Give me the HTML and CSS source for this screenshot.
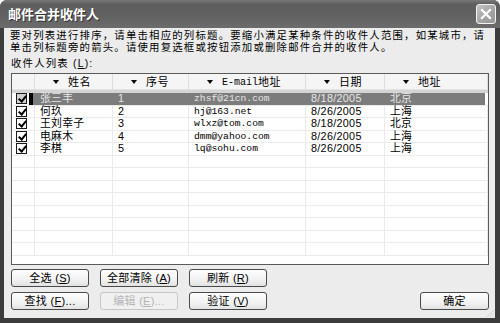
FILE: index.html
```html
<!DOCTYPE html>
<html lang="zh-CN">
<head>
  <meta charset="UTF-8" />
  <title>邮件合并收件人</title>
  <link rel="stylesheet" href="styles.css">
</head>
<body>
  <div class="window">
    <div class="titlebar">
      <span class="title">邮件合并收件人</span>
      <span class="close">
        <svg width="12" height="12" viewBox="0 0 12 12"><path d="M2 2 L10 10 M10 2 L2 10" stroke="#fff" stroke-width="2.2" stroke-linecap="square"/></svg>
      </span>
    </div>

    <div class="content">
      <p class="hint">要对列表进行排序，请单击相应的列标题。要缩小满足某种条件的收件人范围，如某城市，请<br>单击列标题旁的箭头。请使用复选框或按钮添加或删除邮件合并的收件人。</p>
      <div class="label">收件人列表 (<u>L</u>):</div>

      <div class="listview">
        <div class="lv-head">
          <div class="hcell"></div>
          <div class="hcell"><i class="arrow"></i>姓名</div>
          <div class="hcell"><i class="arrow"></i>序号</div>
          <div class="hcell"><i class="arrow"></i><span class="mono">E-mail</span>地址</div>
          <div class="hcell"><i class="arrow"></i>日期</div>
          <div class="hcell"><i class="arrow"></i>地址</div>
        </div>
        <div class="lv-body">
          <div class="row selected">
            <div class="cell"><span class="check"></span></div>
            <div class="cell sel-start">张三丰</div>
            <div class="cell">1</div>
            <div class="cell mono">zhsf@21cn.com</div>
            <div class="cell">8/18/2005</div>
            <div class="cell sel-end">北京</div>
          </div>
          <div class="row">
            <div class="cell"><span class="check"></span></div>
            <div class="cell">何玖</div>
            <div class="cell">2</div>
            <div class="cell mono">hj@163.net</div>
            <div class="cell">8/26/2005</div>
            <div class="cell">上海</div>
          </div>
          <div class="row">
            <div class="cell"><span class="check"></span></div>
            <div class="cell">王刘幸子</div>
            <div class="cell">3</div>
            <div class="cell mono">wlxz@tom.com</div>
            <div class="cell">8/18/2005</div>
            <div class="cell">北京</div>
          </div>
          <div class="row">
            <div class="cell"><span class="check"></span></div>
            <div class="cell">电麻木</div>
            <div class="cell">4</div>
            <div class="cell mono">dmm@yahoo.com</div>
            <div class="cell">8/26/2005</div>
            <div class="cell">上海</div>
          </div>
          <div class="row">
            <div class="cell"><span class="check"></span></div>
            <div class="cell">李棋</div>
            <div class="cell">5</div>
            <div class="cell mono">lq@sohu.com</div>
            <div class="cell">8/26/2005</div>
            <div class="cell">上海</div>
          </div>
          <div class="row empty"><div class="cell"></div><div class="cell"></div><div class="cell"></div><div class="cell"></div><div class="cell"></div><div class="cell"></div></div>
          <div class="row empty"><div class="cell"></div><div class="cell"></div><div class="cell"></div><div class="cell"></div><div class="cell"></div><div class="cell"></div></div>
          <div class="row empty"><div class="cell"></div><div class="cell"></div><div class="cell"></div><div class="cell"></div><div class="cell"></div><div class="cell"></div></div>
          <div class="row empty"><div class="cell"></div><div class="cell"></div><div class="cell"></div><div class="cell"></div><div class="cell"></div><div class="cell"></div></div>
          <div class="row empty"><div class="cell"></div><div class="cell"></div><div class="cell"></div><div class="cell"></div><div class="cell"></div><div class="cell"></div></div>
          <div class="row empty"><div class="cell"></div><div class="cell"></div><div class="cell"></div><div class="cell"></div><div class="cell"></div><div class="cell"></div></div>
          <div class="row empty"><div class="cell"></div><div class="cell"></div><div class="cell"></div><div class="cell"></div><div class="cell"></div><div class="cell"></div></div>
          <div class="row empty"><div class="cell"></div><div class="cell"></div><div class="cell"></div><div class="cell"></div><div class="cell"></div><div class="cell"></div></div>
        </div>
      </div>

      <div class="actions">
        <div class="btn-row">
          <button class="btn">全选 (<u>S</u>)</button>
          <button class="btn">全部清除 (<u>A</u>)</button>
          <button class="btn">刷新 (<u>R</u>)</button>
        </div>
        <div class="btn-row">
          <button class="btn">查找 (<u>F</u>)...</button>
          <button class="btn disabled">编辑 (<u>E</u>)...</button>
          <button class="btn">验证 (<u>V</u>)</button>
          <button class="btn ok">确定</button>
        </div>
      </div>
    </div>

    <svg class="grip" width="9" height="9" viewBox="0 0 9 9"><path d="M8 1 L1 8 M8 4 L4 8 M8 7 L7 8" stroke="#cfcfcf" stroke-width="1"/></svg>
  </div>
</body>
</html>
```

FILE: styles.css
```css
* {
  margin: 0;
  padding: 0;
  box-sizing: border-box;
}
body {
  background: #fff;
  font-family: "Liberation Sans", "Noto Sans CJK SC", sans-serif;
  color: #000;
}
.window {
  position: relative;
  width: 500px;
  height: 323px;
  background: #3c3c3c;
  border-radius: 7px 7px 0 0;
  display: flex;
  flex-direction: column;
  overflow: hidden;
}
.titlebar {
  height: 28px;
  flex: none;
  display: flex;
  align-items: center;
  justify-content: space-between;
  padding: 0 4px 1px 8px;
  background: linear-gradient(#7a7a7a 0%, #5e5e5e 15%, #626262 60%, #6c6c6c 100%);
}
.title {
  color: #fff;
  font-family: "Noto Sans CJK SC", sans-serif;
  font-size: 13px;
  font-weight: bold;
  line-height: 16px;
  text-shadow: 1px 1px 0 #333;
}
.close {
  width: 20px;
  height: 20px;
  border: 1px solid #f2f2f2;
  border-radius: 3px;
  background: linear-gradient(135deg, #c4c4c4, #a2a2a2 60%, #979797);
  display: flex;
  align-items: center;
  justify-content: center;
}
.content {
  flex: 1;
  margin: 0 5px 5px 4px;
  background: #ececec;
  padding: 2px 0 0 7px;
}
.hint {
  margin-left: -1px;
  font-size: 10.4px;
  letter-spacing: 1.2px;
  line-height: 12px;
  white-space: nowrap;
}
.label {
  margin-top: 4px;
  font-size: 10.4px;
  letter-spacing: 1.2px;
  line-height: 12px;
}
.listview {
  margin-top: 3px;
  width: 478px;
  height: 192px;
  border: 1px solid #5a5a5a;
  background: #fff;
  overflow: hidden;
}
.lv-head,
.row {
  display: grid;
  grid-template-columns: 23px 78px 76px 117px 79px 1fr;
}
.lv-head {
  height: 19px;
  background: #f5f5f5;
  border-bottom: 3px solid #d4d4d4;
  box-shadow: inset 0 -1px 0 #e2e2e2;
}
.hcell {
  display: flex;
  align-items: center;
  padding-left: 16px;
  font-size: 11px;
  letter-spacing: 0.5px;
  line-height: 13px;
  border-right: 1px solid #dedede;
}
.hcell .mono {
  font-size: 10px;
  letter-spacing: 0;
}
.arrow {
  width: 9px;
  height: 9px;
  margin-right: 8px;
  display: flex;
  align-items: center;
  justify-content: center;
}
.arrow::after {
  content: "";
  border-left: 3.5px solid transparent;
  border-right: 3.5px solid transparent;
  border-top: 4px solid #000;
}
.row {
  height: 12.5px;
  border-bottom: 1px solid #ebebeb;
}
.cell {
  padding-left: 5px;
  font-size: 10.8px;
  letter-spacing: 0.3px;
  line-height: 11.5px;
  white-space: nowrap;
  border-right: 1px solid #ebebeb;
}
.cell:first-child {
  padding-left: 4px;
  display: flex;
  align-items: center;
}
.mono {
  font-family: "Liberation Mono", monospace;
  font-size: 9.7px;
  letter-spacing: 0;
}
.check {
  width: 11px;
  height: 11px;
  border: 1px solid #1a1a1a;
  background: #fff;
  position: relative;
}
.check::after {
  content: "";
  position: absolute;
  left: 2.5px;
  top: 0px;
  width: 3px;
  height: 6px;
  border-right: 2px solid #000;
  border-bottom: 2px solid #000;
  transform: rotate(40deg);
}
.selected .check {
  background: #cfcfcf;
}
.selected .cell + .cell {
  background: #7c7c7c;
  color: #e6e6e6;
  border-right-color: #7c7c7c;
}
.selected .sel-start {
  border-left: 4px solid #000;
  margin-left: -6px;
  padding-left: 7px;
}
.selected .sel-end {
  margin-right: 3px;
}
.actions {
  margin-top: 4px;
  width: 478px;
  display: flex;
  flex-direction: column;
  gap: 5px;
}
.btn-row {
  display: flex;
  gap: 11px;
}
.btn {
  width: 78px;
  height: 18px;
  border: 1px solid #4a4a4a;
  border-radius: 3px;
  background: linear-gradient(#fdfdfd, #f2f2f2 60%, #e2e2e2);
  font-family: "Liberation Sans", "Noto Sans CJK SC", sans-serif;
  font-size: 11px;
  letter-spacing: 0.3px;
  line-height: 13px;
  color: #000;
}
.btn.disabled {
  border-color: #c6c6c6;
  background: #f0f0f0;
  color: #b4b4b4;
}
.btn.ok {
  width: 69px;
  margin-left: auto;
}
.grip {
  position: absolute;
  right: 5px;
  bottom: 5px;
}
```
